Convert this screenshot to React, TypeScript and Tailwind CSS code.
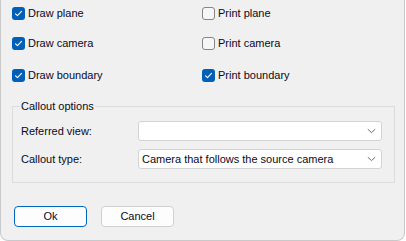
const font = { fontFamily: '"Liberation Sans", Arial, sans-serif' };

function CheckBox({ checked, label }: { checked: boolean; label: string }) {
  return (
    <label className="flex h-[13px] items-center gap-[3px]">
      {checked ? (
        <span className="flex h-[13px] w-[13px] items-center justify-center rounded-[3px] bg-[#005fb8]">
          <svg width="9" height="9" viewBox="0 0 9 9" fill="none">
            <path d="M1.5 4.8 L3.5 6.6 L7.5 2.4" stroke="#ffffff" strokeWidth="1.1" strokeLinecap="round" strokeLinejoin="round" />
          </svg>
        </span>
      ) : (
        <span className="h-[13px] w-[13px] rounded-[3px] border border-[#858585] bg-[#f6f6f6]" />
      )}
      <span className="text-[11px] leading-[13px] text-[#0a0a1e]">{label}</span>
    </label>
  );
}

function Combo({ value }: { value?: string }) {
  return (
    <div className="flex h-[20px] w-[244px] items-center justify-between rounded-[3px] border border-[#d3d3d3] bg-white pl-[3px] pr-[5px]">
      <span className="text-[11px] leading-[13px] text-[#0a0a1e]">{value}</span>
      <svg width="9" height="6" viewBox="0 0 9 6" fill="none">
        <path d="M0.8 1.2 L4.5 4.6 L8.2 1.2" stroke="#6b6b6b" strokeWidth="1" />
      </svg>
    </div>
  );
}

export default function App() {
  return (
    <div className="h-[241px] w-[406px] bg-white" style={font}>
      <div className="h-[241px] w-[405px] rounded-b-[8px] border-x border-b border-[#c9c9c9] bg-[#f0f0f0] pl-[11px] pt-[7px]">
        <div className="flex">
          <div className="w-[190px]">
            <CheckBox checked label="Draw plane" />
          </div>
          <CheckBox checked={false} label="Print plane" />
        </div>
        <div className="mt-[17px] flex">
          <div className="w-[190px]">
            <CheckBox checked label="Draw camera" />
          </div>
          <CheckBox checked={false} label="Print camera" />
        </div>
        <div className="mt-[19px] flex">
          <div className="w-[190px]">
            <CheckBox checked label="Draw boundary" />
          </div>
          <CheckBox checked label="Print boundary" />
        </div>

        <fieldset className="mt-[17px] w-[383px] border border-[#dcdcdc] pb-[13px] pl-[7px] pr-[11px] pt-[8px]">
          <legend className="px-[1px] text-[11px] leading-[14px] text-[#0a0a1e]">Callout options</legend>
          <div className="flex items-center">
            <span className="w-[118px] pl-[1px] text-[11px] leading-[13px] text-[#0a0a1e]">Referred view:</span>
            <Combo />
          </div>
          <div className="mt-[8px] flex items-center">
            <span className="w-[118px] pl-[1px] text-[11px] leading-[13px] text-[#0a0a1e]">Callout type:</span>
            <Combo value="Camera that follows the source camera" />
          </div>
        </fieldset>

        <div className="mt-[23px] flex gap-[14px] pl-[2px]">
          <button className="h-[21px] w-[73px] rounded-[4px] border border-[#0067c0] bg-[#fdfdfd] text-[11px] text-[#0a0a1e]">
            Ok
          </button>
          <button className="h-[21px] w-[73px] rounded-[4px] border border-[#d0d0d0] bg-[#fdfdfd] text-[11px] text-[#0a0a1e]">
            Cancel
          </button>
        </div>
      </div>
    </div>
  );
}
